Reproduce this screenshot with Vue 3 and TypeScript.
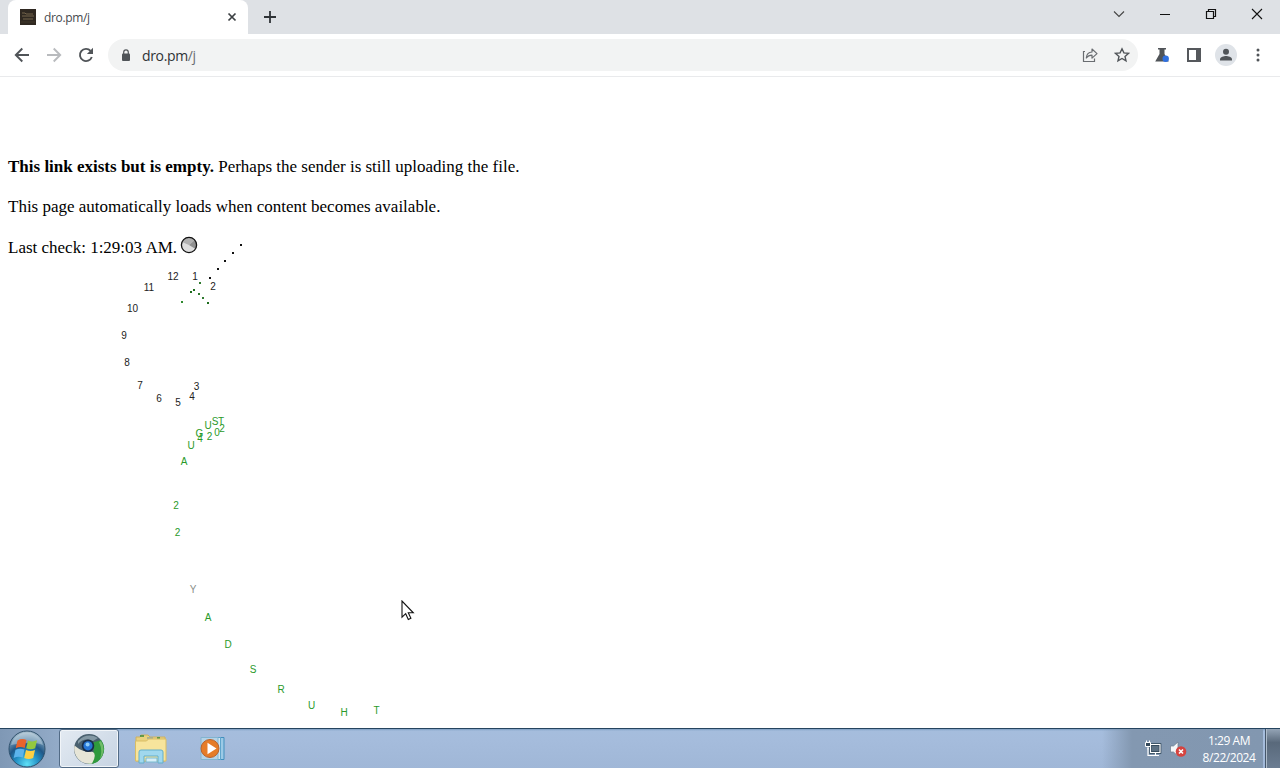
<script setup lang="ts">
import { ref } from 'vue'

interface Glyph {
  text: string
  x: number
  y: number
  color: string
}

interface Dot {
  x: number
  y: number
  color: string
}

const address = ref('dro.pm/j')
const lastCheck = ref('1:29:03 AM')

const glyph = (color: string) => (row: [string, number, number]): Glyph => ({
  text: row[0],
  x: row[1],
  y: row[2],
  color
})

// trailing clock: hours, then the date ring
const hours: [string, number, number][] = [
  ['12', 173, 277], ['1', 195, 277], ['2', 213, 287], ['3', 196.5, 387],
  ['4', 192, 397], ['5', 178, 403], ['6', 159, 399], ['7', 140, 386],
  ['8', 127, 363], ['9', 124, 336], ['10', 132.5, 309], ['11', 149, 288]
]

const date: [string, number, number][] = [
  ['T', 376.5, 711], ['H', 344, 713], ['U', 311.5, 706], ['R', 281, 690],
  ['S', 253, 670], ['D', 228, 645], ['A', 208, 618],
  ['2', 177.5, 533], ['2', 176, 506],
  ['A', 184, 462], ['U', 191, 446], ['G', 199.5, 434], ['U', 208, 426],
  ['S', 215, 422], ['T', 221, 422],
  ['2', 222, 429], ['0', 217, 433], ['2', 209.5, 437], ['4', 200, 439]
]

const glyphs: Glyph[] = [
  ...hours.map(glyph('#222')),
  ...date.map(glyph('#2a9a2a')),
  { text: 'Y', x: 193, y: 590, color: '#8a8f8a' }
]

const dots: Dot[] = [
  { x: 240, y: 244, color: '#111' },
  { x: 232, y: 252, color: '#111' },
  { x: 224, y: 260, color: '#111' },
  { x: 217, y: 268, color: '#111' },
  { x: 209, y: 277, color: '#111' },
  { x: 199, y: 282, color: '#2f7a2f' },
  { x: 193, y: 289, color: '#1c6c1c' },
  { x: 190, y: 291, color: '#1c6c1c' },
  { x: 198, y: 293, color: '#2f7a2f' },
  { x: 202, y: 297, color: '#2f7a2f' },
  { x: 207, y: 302, color: '#1c6c1c' },
  { x: 181, y: 301, color: '#2f8a2f' }
]
</script>

<template>
  <div class="screen">
    <header class="tabstrip">
      <div class="tab">
        <svg class="favicon" width="16" height="16" viewBox="0 0 16 16">
          <rect width="16" height="16" fill="#2f2821" />
          <path d="M2 4h3l1 1h7M2 7h12M3 10h10" stroke="#75644d" fill="none" />
          <path d="M1 13h14" stroke="#40362a" />
        </svg>
        <span class="tab-title">{{ address }}</span>
        <svg class="tab-close" width="10" height="10" viewBox="0 0 10 10">
          <path d="M1.500 1.500l7 7M8.500 1.500l-7 7" stroke="#3c4043" stroke-width="1.700" />
        </svg>
      </div>
      <svg class="new-tab" width="14" height="14" viewBox="0 0 14 14">
        <path d="M7 1v12M1 7h12" stroke="#2f3337" stroke-width="1.800" />
      </svg>
      <div class="window-controls">
        <svg width="46" height="28" viewBox="0 0 46 28">
          <path d="M18 11.500l5 5 5-5" fill="none" stroke="#444" stroke-width="1.100" />
        </svg>
        <svg width="46" height="28" viewBox="0 0 46 28">
          <path d="M18 14.500h10" stroke="#111" />
        </svg>
        <svg width="46" height="28" viewBox="0 0 46 28">
          <path d="M18.500 11.500h7v7h-7zM20.500 11.500v-2h7v7h-2" fill="none" stroke="#111" stroke-width="1.200" />
        </svg>
        <svg width="46" height="28" viewBox="0 0 46 28">
          <path d="M18 9l10 10M28 9l-10 10" stroke="#111" stroke-width="1.100" />
        </svg>
      </div>
    </header>

    <nav class="toolbar">
      <svg class="nav-icon" width="16" height="16" viewBox="0 0 16 16">
        <path d="M15 8H2M8.300 1.500L1.800 8l6.500 6.500" fill="none" stroke="#505458" stroke-width="1.900" />
      </svg>
      <svg class="nav-icon" width="16" height="16" viewBox="0 0 16 16">
        <path d="M1 8h13M7.700 1.500L14.200 8l-6.500 6.500" fill="none" stroke="#b9bbbe" stroke-width="1.900" />
      </svg>
      <svg class="nav-icon" width="16" height="16" viewBox="0 0 16 16">
        <path d="M13.800 10A6.100 6.100 0 1 1 12.600 3.900" fill="none" stroke="#505458" stroke-width="1.900" />
        <path d="M15 .8v6.100H8.900z" fill="#505458" />
      </svg>
      <div class="omnibox">
        <svg class="lock" width="10" height="13" viewBox="0 0 10 13">
          <rect x="1" y="4.500" width="8" height="7.500" rx="1" fill="#505458" />
          <path d="M2.700 5V3.200a2.300 2.300 0 0 1 4.600 0V5" fill="none" stroke="#505458" stroke-width="1.200" />
        </svg>
        <span class="url">dro.pm<span class="path">/j</span></span>
        <svg class="share" width="16" height="16" viewBox="0 0 16 16">
          <path d="M3 4.500H1.500v10h11v-3" fill="none" stroke="#6a6d71" stroke-width="1.200" />
          <path d="M4.300 11c.3-3.800 2.200-5.900 5.700-6V2l5 4.600-5 4.500V8.200C7.500 8.200 5.700 9 4.300 11z" fill="none" stroke="#6a6d71" stroke-width="1.200" stroke-linejoin="round" />
        </svg>
        <svg width="16" height="16" viewBox="0 0 16 16">
          <path d="M8 1.800l1.900 4.100 4.500.5-3.400 3 1 4.500-4-2.400-4 2.400 1-4.500-3.400-3 4.500-.5z" fill="none" stroke="#505458" stroke-width="1.400" />
        </svg>
      </div>
      <div class="actions">
        <svg width="16" height="16" viewBox="0 0 16 16">
          <path d="M4 1h8v1.500h-1.500V7l4.300 7.500H1.200L5.500 7V2.500H4z" fill="#505458" />
          <circle cx="11.700" cy="11.700" r="3.200" fill="#2f70df" />
        </svg>
        <svg width="16" height="16" viewBox="0 0 16 16">
          <path d="M1 1h14v14H1zM3 3v10h7V3z" fill="#55585c" fill-rule="evenodd" />
        </svg>
        <svg class="avatar" width="22" height="22" viewBox="0 0 22 22">
          <circle cx="11" cy="11" r="11" fill="#dfe3e8" />
          <circle cx="11" cy="7.800" r="3" fill="#505458" />
          <path d="M5 16.500v-1.300c0-2 4-3.100 6-3.100s6 1.100 6 3.100v1.300z" fill="#505458" />
        </svg>
        <svg class="more" width="4" height="14" viewBox="0 0 4 14">
          <circle cx="2" cy="2" r="1.500" fill="#505458" />
          <circle cx="2" cy="7" r="1.500" fill="#505458" />
          <circle cx="2" cy="12" r="1.500" fill="#505458" />
        </svg>
      </div>
    </nav>

    <main class="page">
      <p><b>This link exists but is empty.</b> Perhaps the sender is still uploading the file.</p>
      <p>This page automatically loads when content becomes available.</p>
      <p class="status">
        <span>Last check: {{ lastCheck }}.</span>
        <svg class="spinner" width="18" height="18" viewBox="0 0 18 18">
          <circle cx="9" cy="9" r="7.600" fill="#dedede" />
          <path d="M9 9L2 6A7.600 7.600 0 0 1 14.800 4z" fill="#b0b0b0" />
          <path d="M9 9l5.800-5A7.600 7.600 0 0 1 15.500 13z" fill="#909090" />
          <circle cx="9" cy="9" r="7.600" fill="none" stroke="#111" stroke-width="1.300" />
        </svg>
      </p>
    </main>

    <footer class="taskbar">
      <div class="start">
        <svg width="40" height="40" viewBox="0 0 40 40">
          <defs>
            <radialGradient id="orb" cx="50%" cy="92%" r="90%">
              <stop offset="0" stop-color="#5fe0f6" />
              <stop offset="0.350" stop-color="#2391c6" />
              <stop offset="0.600" stop-color="#1f5787" />
              <stop offset="1" stop-color="#a9bfce" />
            </radialGradient>
          </defs>
          <circle cx="20" cy="20" r="18" fill="url(#orb)" stroke="#2f516c" />
          <path d="M4 16a16.500 16.500 0 0 1 32 0c-9-4-22-2-32 0z" fill="#dcebf2" opacity="0.400" />
          <path d="M10.500 11.500q4.500-2.500 9-.5l-1.800 8q-4.500-2-9 .2z" fill="#e8642c" />
          <path d="M21 11.500q4.500 2 9-.2l-1.800 8q-4.500 2-9 0z" fill="#93c83f" />
          <path d="M8.500 20.800q4.500-2 9-.2l-1.800 8q-4.500-1.800-9 .4z" fill="#5cb4ec" />
          <path d="M19 21q4.500 2 9 0l-1.800 8q-4.500 2-9 0z" fill="#fdd044" />
        </svg>
      </div>
      <div class="task active">
        <svg width="32" height="32" viewBox="0 0 32 32">
          <circle cx="16" cy="16" r="15" fill="#49606f" />
          <path d="M20 9.500L28 7A15 15 0 0 1 15 31Q23 21 20 9.500z" fill="#2f9a3d" />
          <path d="M28 8A15 15 0 0 1 27 26Q30 17 26 9z" fill="#70bd68" />
          <path d="M1.500 12.500Q7 17 11 18l9 1q4 3-1 11.500A15 15 0 0 1 1.500 12.500z" fill="#e6e5d7" />
          <path d="M5 8Q14-1 25 5l-5 3Q11 4 5 11z" fill="#8398a4" />
          <circle cx="15" cy="12.800" r="6.300" fill="#182d48" />
          <circle cx="15" cy="12.800" r="4.600" fill="#2474d6" />
          <circle cx="14.600" cy="11.500" r="2" fill="#8dccfa" />
        </svg>
      </div>
      <div class="task">
        <svg width="34" height="30" viewBox="0 0 34 30">
          <path d="M2 3h4l1-2h7l2 2h15v24H2z" fill="#e9d27e" stroke="#cdb062" />
          <path d="M6 2h4M23 4h3" stroke="#3b8a3b" stroke-width="1.500" />
          <path d="M13 4h6" stroke="#98a898" stroke-width="1.500" />
          <path d="M1.500 7h11l2-2H32v22H1.500z" fill="#f7e49c" stroke="#d9bd64" />
          <path d="M5 29V18q0-2 2-2h20q2 0 2 2v11h-5v-7H10v7z" fill="#a0d8ee" stroke="#63aecb" />
          <path d="M12 24h11v4H12z" fill="#d6eff8" stroke="#79bad1" />
        </svg>
      </div>
      <div class="task">
        <svg width="28" height="26" viewBox="0 0 28 26">
          <path d="M8 1.500h17v22H8z" fill="#9ccae6" stroke="#438fbd" />
          <path d="M5 1.500h16.500v22H5z" fill="#d0e7f3" stroke="#5fa5cc" />
          <path d="M2 1.500h17v22H2z" fill="#b4d3e7" stroke="#83b4d0" />
          <circle cx="11" cy="12.500" r="9" fill="#e57c28" stroke="#b9622b" />
          <path d="M8.500 6.800l9 5.700-9 5.700z" fill="#fff" />
        </svg>
      </div>
      <div class="tray">
        <svg width="18" height="18" viewBox="0 0 18 18">
          <path d="M6.500 4.500h9.500v8h-9.500z" fill="#5d7183" stroke="#2b4153" stroke-width="2.600" />
          <path d="M6.500 4.500h9.500v8h-9.500zM11.500 13v2.500M8 15.500h7M4 8v7.500h4" fill="none" stroke="#fff" stroke-width="1.200" />
          <path d="M1.500 2.500h5v4h-5z" fill="#34495b" stroke="#fff" />
          <path d="M2.500 .5v2M5.500 .5v2M4 6.500v3" stroke="#fff" />
        </svg>
        <svg width="18" height="18" viewBox="0 0 18 18">
          <path d="M1.500 6h3L9 2v14l-4.500-4h-3z" fill="#f5f7f9" stroke="#6d7d8d" stroke-width="0.700" />
          <circle cx="12" cy="11.500" r="5.300" fill="#d5433f" />
          <path d="M10 9.500l4 4M14 9.500l-4 4" stroke="#fff" stroke-width="1.600" />
        </svg>
        <div class="clock">
          <span>1:29 AM</span>
          <span>8/22/2024</span>
        </div>
      </div>
      <div class="show-desktop"></div>
    </footer>

    <div class="cursor-clock">
      <span
        v-for="(g, i) in glyphs"
        :key="'g' + i"
        class="glyph"
        :style="{ left: g.x + 'px', top: g.y + 'px', color: g.color }"
      >{{ g.text }}</span>
      <i
        v-for="(d, i) in dots"
        :key="'d' + i"
        class="dot"
        :style="{ left: d.x + 'px', top: d.y + 'px', background: d.color }"
      ></i>
    </div>

    <svg class="pointer" width="14" height="21" viewBox="0 0 14 21">
      <path d="M1 1v16.200l3.700-3.500 2.600 5.800 2.600-1.200-2.600-5.500h5z" fill="#fff" stroke="#111" stroke-width="1.100" />
    </svg>
  </div>
</template>

<style>
body {
  margin: 0;
  overflow: hidden;
}
</style>

<style scoped>
.screen {
  position: relative;
  display: flex;
  flex-direction: column;
  width: 1280px;
  height: 768px;
  overflow: hidden;
  background: #fff;
}

svg {
  display: block;
  flex: none;
}

.tabstrip {
  display: flex;
  height: 34px;
  background: #dee1e5;
  font-family: 'Open Sans', 'Noto Sans', sans-serif;
}

.tab {
  display: flex;
  align-items: center;
  box-sizing: border-box;
  width: 240px;
  margin-left: 8px;
  padding: 0 11px 0 12px;
  background: #fff;
  border-radius: 8px 8px 0 0;
}

.tab-title {
  flex: 1;
  margin-left: 8px;
  font-size: 12px;
  letter-spacing: -0.350px;
  color: #45494d;
}

.new-tab {
  margin: 10px 0 0 15px;
}

.window-controls {
  display: flex;
  margin-left: auto;
}

.toolbar {
  display: flex;
  align-items: center;
  box-sizing: border-box;
  height: 43px;
  padding: 0 19px 0 14px;
  border-bottom: 1px solid #e9eaec;
}

.nav-icon {
  margin-right: 16px;
}

.omnibox {
  display: flex;
  align-items: center;
  box-sizing: border-box;
  width: 1030px;
  height: 32px;
  margin-left: -2px;
  padding: 0 8px 0 13px;
  border-radius: 16px;
  background: #f2f3f3;
}

.url {
  flex: 1;
  margin-left: 11px;
  padding-top: 1px;
  font: 14px/19px 'Open Sans', 'Noto Sans', sans-serif;
  letter-spacing: -0.350px;
  color: #2e3235;
}

.path {
  color: #6a6e72;
}

.share {
  margin-right: 16px;
}

.actions {
  display: flex;
  align-items: center;
  gap: 16px;
  margin-left: 16px;
}

.avatar {
  margin: 0 -3px;
}

.more {
  margin-left: 6px;
}

.page {
  flex: 1;
  padding: 80px 8px 0;
  font: 17px/20px 'Liberation Serif', 'Times New Roman', serif;
  color: #000;
}

.page p {
  height: 20px;
  margin: 0 0 20px;
}

.page .status {
  display: flex;
  align-items: flex-start;
  padding-top: 1px;
}

.spinner {
  margin: -2px 0 0 3px;
}

.taskbar {
  display: flex;
  box-sizing: border-box;
  height: 40px;
  border-top: 1px solid #25445f;
  background: linear-gradient(to bottom, #7e9fc2 0, #a5bddd 2px, #a5bcdc 11px, #a0b7d7 100%);
}

.start {
  width: 59px;
  padding-left: 7px;
  box-sizing: border-box;
  background: linear-gradient(to right, #7f98b5, #93abc8);
}

.task {
  display: flex;
  align-items: center;
  justify-content: center;
  box-sizing: border-box;
  width: 60px;
  margin-left: 2px;
}

.task.active {
  margin-left: 0;
  border: 1px solid #526b86;
  border-radius: 3px;
  background: linear-gradient(135deg, #e3eaf2, #c7d4e3);
  box-shadow: inset 0 0 0 1px #f1f5f9;
}

.tray {
  display: flex;
  align-items: center;
  gap: 7px;
  margin-left: auto;
  padding-left: 42px;
  background: linear-gradient(to right, transparent 0, #8398b1 30px, #8297b0 100%);
}

.clock {
  display: flex;
  flex-direction: column;
  align-items: center;
  width: 72px;
  margin-left: -1px;
  margin-right: -2px;
  font: 12px/17px 'Open Sans', 'Noto Sans', sans-serif;
  letter-spacing: -0.450px;
  color: #fff;
}

.show-desktop {
  box-sizing: border-box;
  width: 15px;
  margin-left: 2px;
  border-left: 1px solid #45566a;
  background: linear-gradient(#94a4b6 0, #59697b 35%, #6b7d92 100%);
  box-shadow: inset 1px 0 #aebccb;
}

/* characters that float freely over the page */
.cursor-clock {
  position: absolute;
  inset: 0;
  pointer-events: none;
}

.glyph {
  position: absolute;
  transform: translate(-50%, -50%);
  font: 10px/10px 'Liberation Sans', Arial, sans-serif;
}

.dot {
  position: absolute;
  width: 2px;
  height: 2px;
}

.pointer {
  position: absolute;
  left: 401px;
  top: 600px;
}
</style>
